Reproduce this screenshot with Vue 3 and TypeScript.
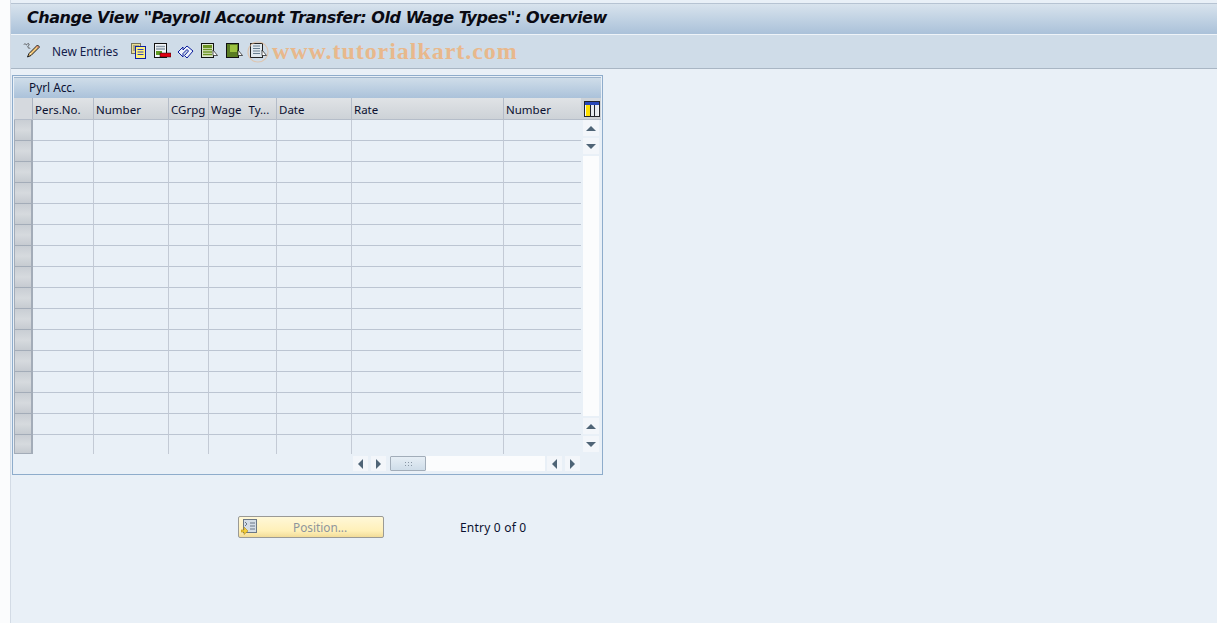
<script setup lang="ts">
const cols = [
  { label: 'Pers.No.', w: 61 },
  { label: 'Number', w: 75 },
  { label: 'CGrpg', w: 40 },
  { label: 'Wage Ty...', w: 68 },
  { label: 'Date', w: 75 },
  { label: 'Rate', w: 152 },
  { label: 'Number', w: 77 }
]
const rows = Array.from({ length: 16 }, (_, i) => i)
</script>

<template>
  <div class="page">
    <div class="gutter"></div>
    <div class="main">
      <header class="titlebar">
        <h1>Change View "Payroll Account Transfer: Old Wage Types": Overview</h1>
      </header>
      <div class="toolbar">
        <svg class="ic pencil" width="18" height="17" viewBox="0 0 18 17">
          <path d="M1 2.500c1-2 2 1 3 0s1-2 2 0c1 1-2 1-1 3 .5 1 2 0 2 1" fill="none" stroke="#444" stroke-width="0.900"/>
          <path d="M14.500 3l2 2-8.500 8.500-3.500 1.500 1.500-3.500z" fill="#f4c878" stroke="#1c1c1c" stroke-width="1"/>
          <path d="M7 11l1 1" stroke="#fff2cc" stroke-width="1"/>
          <path d="M13.500 4l2 2" stroke="#d0606a" stroke-width="1"/>
        </svg>
        <span class="new">New Entries</span>
        <svg class="ic gap8" width="16" height="16" viewBox="0 0 16 16">
          <rect x="1.500" y="0.500" width="9" height="10" fill="#e8dc96" stroke="#77755a"/>
          <path d="M3 3h6M3 5h3M3 7h3" stroke="#77755a"/>
          <rect x="5.500" y="3.500" width="10" height="12" fill="#fff27a" stroke="#0a1ea8"/>
          <path d="M7.500 6.500h6M7.500 9h6M7.500 11.500h6" stroke="#3040b8"/>
        </svg>
        <svg class="ic gap6" width="17" height="16" viewBox="0 0 17 16">
          <rect x="0.500" y="0.500" width="12" height="14" fill="#f3f6f8" stroke="#111"/>
          <path d="M2 3.500h9M2 6h9" stroke="#8a9aa8" stroke-width="1.500"/>
          <rect x="2" y="8" width="6" height="4" fill="#5e9a22"/>
          <rect x="6" y="10" width="11" height="4" fill="#e00010" stroke="#111" stroke-width="0.500"/>
        </svg>
        <svg class="ic" width="17" height="16" viewBox="0 0 17 16">
          <path d="M1 9l5-5v3l4-4 6 5-6 7-2.500-2.500 4-4.500-1.500-1.500L6 10.500V14z" fill="#eef3fb" stroke="#0a1c9c" stroke-width="1"/>
        </svg>
        <svg class="ic gap8" width="17" height="16" viewBox="0 0 17 16">
          <rect x="0.500" y="0.500" width="12" height="14" fill="#dfe8d0" stroke="#111"/>
          <rect x="2" y="2" width="9" height="3" fill="#6c9422"/>
          <path d="M2 6.500h9M2 9h9M2 11.500h9" stroke="#6c9422" stroke-width="1.500"/>
          <path d="M12 7l4.500 5.500H12z" fill="#fff" stroke="#111" stroke-width="0.700"/>
        </svg>
        <svg class="ic" width="17" height="16" viewBox="0 0 17 16">
          <rect x="0.500" y="0.500" width="12" height="14" fill="#5a7c22" stroke="#111"/>
          <rect x="4" y="2" width="7" height="7" fill="#9cc240"/>
          <path d="M12 7l4.500 5.500H12z" fill="#fff" stroke="#111" stroke-width="0.700"/>
        </svg>
        <svg class="ic" width="17" height="16" viewBox="0 0 17 16">
          <rect x="0.500" y="0.500" width="12" height="14" fill="#e0e8ee" stroke="#222"/>
          <path d="M3 3h7M3 5.500h7M3 8h7M3 10.500h7" stroke="#687e90" stroke-width="1.200"/>
          <path d="M12 7l4.500 5.500H12z" fill="#fff" stroke="#111" stroke-width="0.700"/>
        </svg>
        <svg class="ring" width="24" height="24" viewBox="0 0 24 24">
          <circle cx="12" cy="12" r="10" fill="none" stroke="#e8b88c" stroke-width="1.200" opacity="0.600"/>
        </svg>
        <span class="watermark">www.tutorialkart.com</span>
      </div>

      <div class="content">
        <section class="panel">
          <div class="panel-title">Pyrl Acc.</div>
          <div class="table-area">
            <div class="table-col">
              <div class="thead">
                <div class="corner"></div>
                <div v-for="c in cols" :key="c.label + c.w" class="th" :style="{ width: c.w + 'px' }">{{ c.label }}</div>
              </div>
              <div v-for="r in rows" :key="r" class="tr">
                <div class="rowhead"></div>
                <div v-for="c in cols" :key="c.label + c.w" class="td" :style="{ width: c.w + 'px' }"></div>
              </div>
            </div>
            <div class="side">
              <div class="config">
                <svg width="16" height="16" viewBox="0 0 16 16">
                  <rect x="0.500" y="0.500" width="15" height="15" fill="#f4f6f8" stroke="#20242c"/>
                  <rect x="1" y="1" width="14" height="3" fill="#2747b8"/>
                  <rect x="2" y="4" width="4" height="11" fill="#ffe000"/>
                  <path d="M6.500 4v11M10.500 4v11" stroke="#20242c"/>
                  <rect x="7" y="4" width="3" height="11" fill="#e6ebf0"/>
                  <rect x="11" y="4" width="3" height="11" fill="#e6ebf0"/>
                </svg>
              </div>
              <div class="vscroll">
                <div class="sbtn"><i class="arrow up"></i></div>
                <div class="sbtn"><i class="arrow down"></i></div>
                <div class="strack"></div>
                <div class="sbtn"><i class="arrow up"></i></div>
                <div class="sbtn"><i class="arrow down"></i></div>
              </div>
            </div>
          </div>
          <div class="hscroll">
            <div class="sbtn h"><i class="arrow left"></i></div>
            <div class="sbtn h"><i class="arrow right"></i></div>
            <div class="track">
              <div class="thumb"><i class="grip"></i></div>
            </div>
            <div class="sbtn h"><i class="arrow left"></i></div>
            <div class="sbtn h"><i class="arrow right"></i></div>
          </div>
        </section>

        <div class="pos-row">
          <button class="pos-btn" type="button">
            <svg width="17" height="16" viewBox="0 0 17 16">
              <rect x="2.500" y="0.500" width="13" height="13" fill="#d4dde6" stroke="#6b7785"/>
              <path d="M9 4h5M9 7h5M9 10h5" stroke="#6b7785"/>
              <path d="M4 3l2 2-2 2" fill="none" stroke="#6b7785"/>
              <path d="M0 11h3V8l4 4-4 3.500V13H0z" fill="#f4cf3a" stroke="#b08a20" stroke-width="0.600"/>
            </svg>
            <span>Position...</span>
          </button>
          <span class="entry">Entry 0 of 0</span>
        </div>
      </div>
    </div>
  </div>
</template>

<style>
html, body { margin: 0; background: #fff; overflow: hidden; }
</style>

<style scoped>
.page {
  display: flex;
  width: 1217px;
  height: 623px;
  overflow: hidden;
  font-family: "Noto Sans", "Open Sans", sans-serif;
  font-size: 12px;
  color: #0b1030;
}
.gutter { width: 10px; flex: none; background: #fbfcfd; border-right: 1px solid #d3dbe5; }
.main { flex: 1; display: flex; flex-direction: column; background: #e9f0f7; padding-top: 3px; }
.titlebar {
  background: linear-gradient(#d8e3ed, #aac1d9);
  border-top: 1px solid #b6c3d2;
  display: flex;
  align-items: center;
  padding: 0 0 3px 16px;
  box-sizing: border-box;
  height: 31px;
}
h1 {
  margin: 0;
  font: italic bold 16px "DejaVu Sans", sans-serif;
  letter-spacing: -0.44px;
  color: #0a0a12;
  white-space: nowrap;
}
.toolbar {
  position: relative;
  height: 33px;
  border-top: 1px solid #eef3f8;
  border-bottom: 1px solid #a9b6c4;
  background: #cfdce8;
  display: flex;
  align-items: center;
  padding-left: 12px;
}
.ic { flex: none; display: block; margin-right: 7px; margin-top: -2px; }
.pencil { margin-right: 11px; }
.gap8 { margin-right: 8px; }
.gap6 { margin-right: 6px; }
.new { margin: 0 11px 0 0; padding-bottom: 2px; color: #14204a; width: 67px; white-space: nowrap; font-size: 11.800px; }
.ring { position: absolute; left: 235px; top: 5px; }
.watermark {
  position: absolute;
  left: 261px;
  top: 3px;
  font: bold 24px "Liberation Serif", serif;
  letter-spacing: 0.950px;
  color: #e8b88c;
  white-space: nowrap;
}
.content { padding: 6px 0 0 1px; }
.panel {
  width: 587px;
  height: 396px;
  border: 1px solid #8eaccb;
  background: #e9f0f7;
  padding: 1px;
  display: flex;
  flex-direction: column;
}
.panel-title {
  height: 21px;
  line-height: 18px;
  padding-left: 15px;
  font-size: 11.800px;
  background: linear-gradient(#cfdde9, #abc2da);
  border-top: 1px solid #9db4cc;
  box-sizing: border-box;
}
.table-area { display: flex; }
.table-col { width: 567px; }
.thead { display: flex; height: 21px; background: linear-gradient(#e0e3e6, #cdd2d7); border-bottom: 1px solid #b5bdc9; }
.corner { width: 18px; flex: none; background: #d5d9de; border-right: 1px solid #aab3c0; }
.th { box-sizing: border-box; flex: none; border-right: 1px solid #b4bcc8; padding-left: 2px; line-height: 24px; font-size: 11.500px; word-spacing: 4px; white-space: nowrap; overflow: hidden; }
.th:last-child { border-right: 0; }
.tr { display: flex; height: 21px; }
.rowhead {
  width: 19px;
  flex: none;
  box-sizing: border-box;
  background: linear-gradient(#c9ced4, #d6dade 50%, #c6cbd1);
  border: 1px solid #a3acb8;
  border-width: 0 2px 1px 1px;
  height: 21px;
}
.td { box-sizing: border-box; flex: none; border-right: 1px solid #c3cad5; border-bottom: 1px solid #bcc5d2; height: 21px; }
.td:last-child { border-right: 0; }
.tr:last-child { height: 19px; }
.tr:last-child .td { border-bottom: 0; height: 19px; }
.tr:last-child .rowhead { height: 19px; }
.side { width: 20px; flex: none; display: flex; flex-direction: column; }
.config { height: 21px; background: #cdd2d7; display: flex; align-items: center; justify-content: center; padding-left: 1px; border-bottom: 1px solid #b5bdc9; }
.vscroll { display: flex; flex-direction: column; align-items: center; gap: 2px; height: 332px; }
.sbtn {
  width: 16px;
  height: 16px;
  flex: none;
  background: #f3f6fa;
  display: flex;
  align-items: center;
  justify-content: center;
}
.sbtn.h { width: 15px; height: 15px; }
.strack { flex: 1; width: 16px; background: #fbfcfd; }
.arrow { display: block; width: 0; height: 0; border: 0 solid transparent; }
.arrow.up { border-width: 0 5px 5px; border-bottom-color: #4f6476; }
.arrow.down { border-width: 5px 5px 0; border-top-color: #4f6476; }
.arrow.left { border-width: 5px 5px 5px 0; border-right-color: #4f6476; }
.arrow.right { border-width: 5px 0 5px 5px; border-left-color: #4f6476; }
.hscroll {
  display: flex;
  align-items: center;
  gap: 3px;
  height: 15px;
  margin-top: 2px;
  padding-left: 339px;
}
.track { width: 155px; height: 15px; flex: none; background: #fbfcfd; margin: 0 -1px 0 1px; }
.thumb {
  width: 36px;
  height: 15px;
  box-sizing: border-box;
  border: 1px solid #a2adb9;
  border-radius: 1px;
  background: linear-gradient(#e6eef5, #cfdde9);
  display: flex;
  align-items: center;
  justify-content: center;
}
.grip {
  display: block;
  width: 9px;
  height: 6px;
  background-image: radial-gradient(circle, #8a97a5 0.8px, transparent 1px);
  background-size: 3px 3px;
}
.pos-row { display: flex; align-items: center; margin-top: 41px; padding-left: 226px; }
.pos-btn {
  width: 146px;
  height: 22px;
  display: flex;
  align-items: center;
  padding: 0 0 0 2px;
  border: 1px solid #9a9a96;
  border-radius: 2px;
  background: linear-gradient(#fff8d8, #fff0b8 70%, #f2dc98);
  font: 11.800px "Noto Sans", sans-serif;
  color: #8e959c;
}
.pos-btn span { margin-left: 35px; }
.entry { margin-left: 76px; color: #0b1030; letter-spacing: 0.200px; }
</style>
